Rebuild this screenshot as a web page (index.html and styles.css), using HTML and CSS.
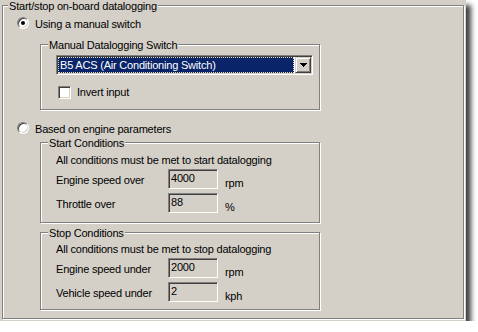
FILE: index.html
```html
<!DOCTYPE html>
<html lang="en">
<head>
  <meta charset="UTF-8" />
  <title>Datalogging Options</title>
  <link rel="stylesheet" href="styles.css">
</head>
<body>

<div class="window">
  <div class="group outer">
    <span class="caption">Start/stop on-board datalogging</span>

    <label class="option">
      <span class="radio checked"></span>
      <span class="option-text">Using a manual switch</span>
    </label>

    <div class="group switch-box">
      <span class="caption">Manual Datalogging Switch</span>
      <div class="combo">
        <span class="combo-value">B5 ACS (Air Conditioning Switch)</span>
        <span class="combo-btn">
          <svg width="7" height="4" viewBox="0 0 7 4" shape-rendering="crispEdges">
            <rect x="0" y="0" width="7" height="1" fill="#000"/>
            <rect x="1" y="1" width="5" height="1" fill="#000"/>
            <rect x="2" y="2" width="3" height="1" fill="#000"/>
            <rect x="3" y="3" width="1" height="1" fill="#000"/>
          </svg>
        </span>
      </div>
      <label class="check-row">
        <span class="checkbox"></span>
        <span>Invert input</span>
      </label>
    </div>

    <label class="option second">
      <span class="radio"></span>
      <span class="option-text">Based on engine parameters</span>
    </label>

    <div class="group cond start-box">
      <span class="caption">Start Conditions</span>
      <div class="note">All conditions must be met to start datalogging</div>
      <div class="field">
        <span class="field-label">Engine speed over</span>
        <span class="textbox">4000</span>
        <span class="unit">rpm</span>
      </div>
      <div class="field">
        <span class="field-label">Throttle over</span>
        <span class="textbox">88</span>
        <span class="unit">%</span>
      </div>
    </div>

    <div class="group cond stop-box">
      <span class="caption">Stop Conditions</span>
      <div class="note">All conditions must be met to stop datalogging</div>
      <div class="field">
        <span class="field-label">Engine speed under</span>
        <span class="textbox">2000</span>
        <span class="unit">rpm</span>
      </div>
      <div class="field">
        <span class="field-label">Vehicle speed under</span>
        <span class="textbox">2</span>
        <span class="unit">kph</span>
      </div>
    </div>
  </div>
</div>

</body>
</html>
```

FILE: styles.css
```css
body {
  margin: 0;
  background: #fff;
  font-family: "Liberation Sans", Arial, sans-serif;
  font-size: 11px;
  line-height: 13px;
  letter-spacing: -0.2px;
  color: #000;
}
.window {
  width: 466px;
  height: 321px;
  box-sizing: border-box;
  padding: 5px 0 0 2px;
  background: #d4d0c8;
  box-shadow: 5px 5px 5px rgba(0, 0, 0, 0.75);
}

/* etched group box */
.group {
  position: relative;
  box-sizing: border-box;
  border: 1px solid #808080;
  box-shadow: inset 1px 1px #fff, 1px 1px #fff;
}
.caption {
  position: absolute;
  top: -6px;
  left: 7px;
  padding: 0 1px;
  background: #d4d0c8;
  white-space: nowrap;
}
.outer {
  width: 462px;
  height: 314px;
  padding: 11px 0 0 14px;
  display: flex;
  flex-direction: column;
  align-items: flex-start;
}
.outer > .caption {
  left: 5px;
}

/* radio buttons */
.option {
  display: flex;
  align-items: flex-start;
  height: 13px;
}
.option.second {
  margin-top: 12px;
}
.option-text {
  margin-top: 1px;
}
.radio {
  position: relative;
  width: 12px;
  height: 12px;
  box-sizing: border-box;
  margin-right: 6px;
  border: 1px solid;
  border-color: #808080 #fff #fff #808080;
  border-radius: 50%;
  background: #fff;
  box-shadow: inset 1px 1px #404040, inset -1px -1px #d4d0c8;
}
.radio.checked::after {
  content: "";
  position: absolute;
  left: 3px;
  top: 3px;
  width: 4px;
  height: 4px;
  border-radius: 50%;
  background: #000;
}

/* manual switch box */
.switch-box {
  width: 280px;
  height: 66px;
  margin: 14px 0 0 23px;
  padding: 10px 0 0 15px;
}
.combo {
  display: flex;
  width: 257px;
  height: 20px;
  box-sizing: border-box;
  padding: 1px;
  border: 1px solid;
  border-color: #808080 #fff #fff #808080;
  box-shadow: inset 1px 1px #404040, inset -1px -1px #d4d0c8;
  background: #fff;
}
.combo-value {
  flex: 1;
  margin-right: 1px;
  padding-left: 1px;
  border: 1px dotted #ebdcb4;
  background: #0a246a;
  color: #fff;
  line-height: 14px;
  white-space: nowrap;
}
.combo-btn {
  display: flex;
  align-items: center;
  justify-content: center;
  width: 16px;
  height: 16px;
  box-sizing: border-box;
  border: 1px solid;
  border-color: #d4d0c8 #404040 #404040 #d4d0c8;
  box-shadow: inset 1px 1px #fff, inset -1px -1px #808080;
  background: #d4d0c8;
}
.check-row {
  display: flex;
  align-items: flex-start;
  margin: 11px 0 0 2px;
}
.checkbox {
  width: 13px;
  height: 13px;
  box-sizing: border-box;
  margin-right: 6px;
  border: 1px solid;
  border-color: #808080 #fff #fff #808080;
  box-shadow: inset 1px 1px #404040, inset -1px -1px #d4d0c8;
  background: #fff;
}

/* conditions */
.cond {
  width: 280px;
  margin-left: 23px;
  padding-left: 15px;
}
.start-box {
  height: 81px;
  margin-top: 7px;
  padding-top: 11px;
}
.stop-box {
  height: 78px;
  margin-top: 9px;
  padding-top: 10px;
}
.note {
  height: 13px;
  margin-bottom: 2px;
  white-space: nowrap;
}
.field {
  display: flex;
  align-items: flex-start;
  height: 20px;
  margin-bottom: 4px;
}
.field-label {
  width: 112px;
  padding-top: 5px;
}
.textbox {
  width: 50px;
  height: 20px;
  box-sizing: border-box;
  padding: 2px 0 0 2px;
  border: 1px solid;
  border-color: #808080 #fff #fff #808080;
  box-shadow: inset 1px 1px #404040, inset -1px -1px #d4d0c8;
  background: #d4d0c8;
}
.unit {
  margin-left: 7px;
  padding-top: 8px;
}
```
